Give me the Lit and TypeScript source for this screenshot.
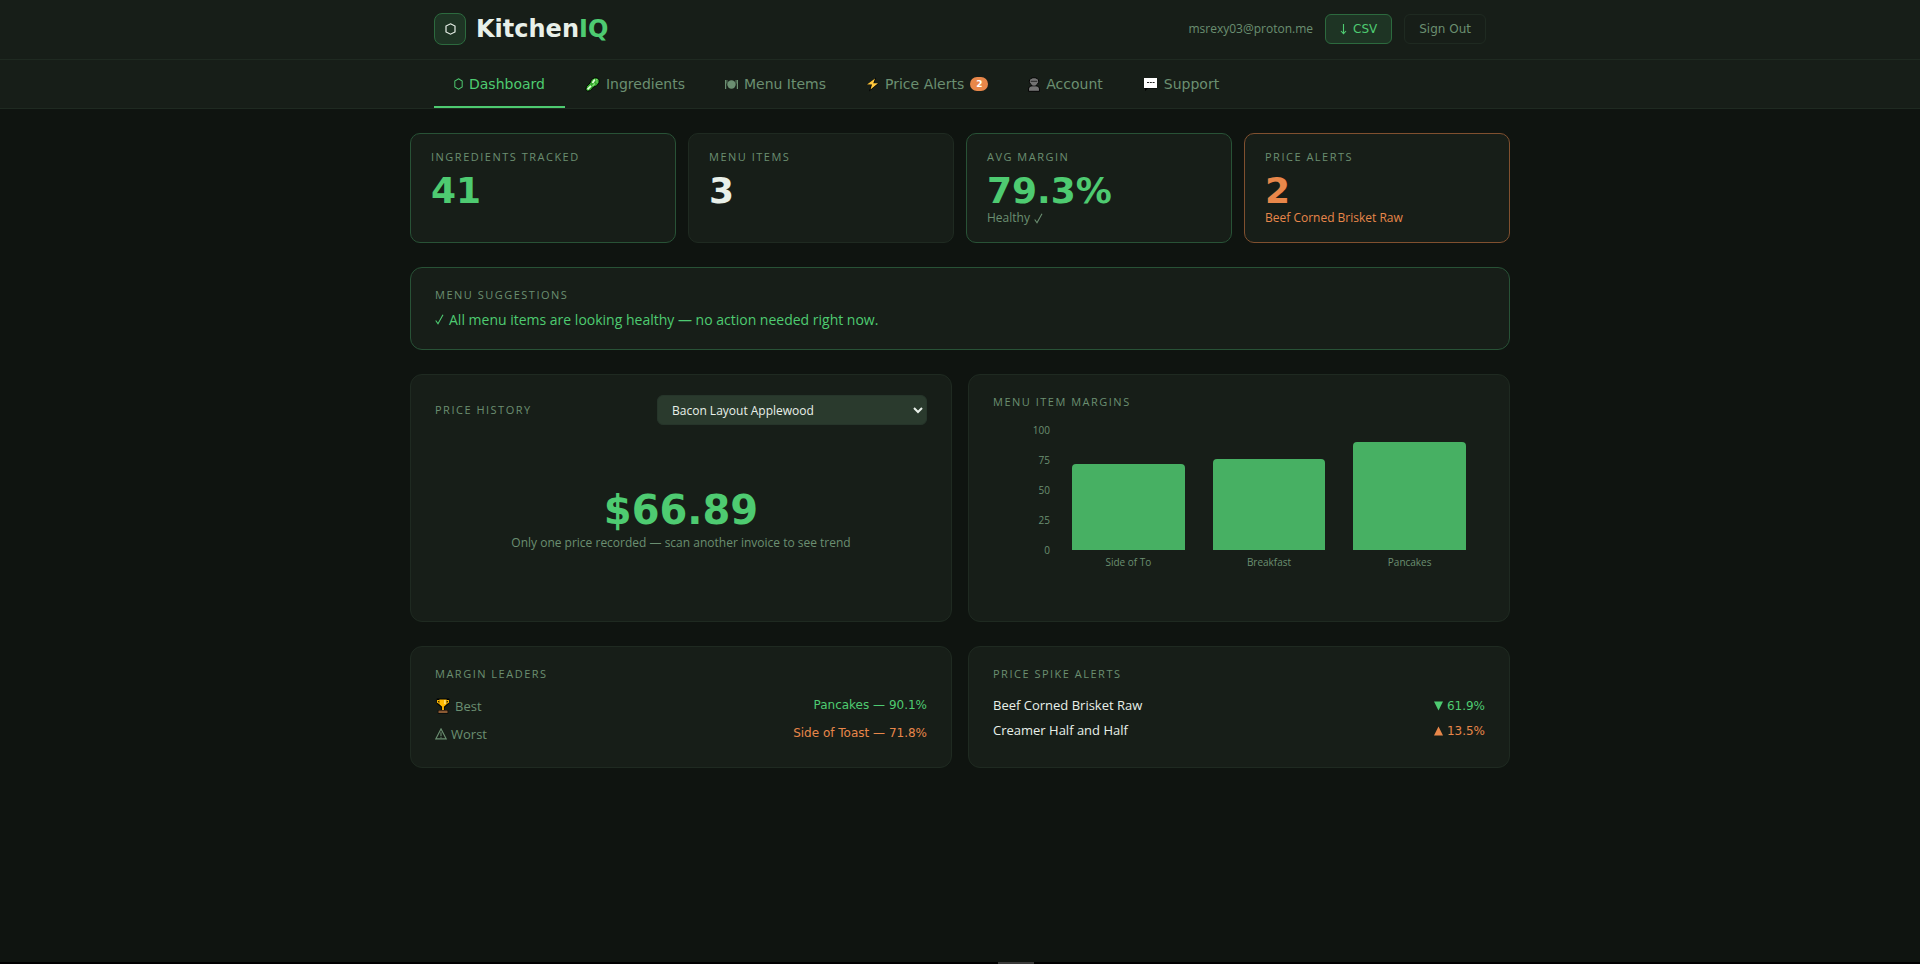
import { LitElement, html, css, svg } from "lit";
import { customElement, state } from "lit/decorators.js";

const hexagon = (w: number) => svg`
  <svg width=${w} height="12" viewBox="0 0 11 12" fill="none" stroke="currentColor" stroke-width="1.2" preserveAspectRatio="none" aria-hidden="true">
    <path d="M5.500 .8 10 3v6L5.500 11.200 1 9V3z"/>
  </svg>`;

const cucumber = svg`
  <svg width="15" height="15" viewBox="0 0 15 15" aria-hidden="true">
    <path d="M2.500 14.300.8 12.500 1.500 9.500 5 6l1.500-3.500L9.500.8l2.500.1 2.300 2-.3 3-2.500 3L8.500 10l-3 3.500z" fill="#35a82e" stroke="#000" stroke-width=".9"/>
    <path d="M2.500 12.300 6 8.800M7.500 6l2.300-3.500" stroke="#e0ffd9" stroke-width="1.800"/>
    <path d="M7.500 9 10 6.500M11 3l1.500-.5M11.500 5.500l1-1" stroke="#7fe070" stroke-width="1.500"/>
  </svg>`;

const plate = svg`
  <svg width="13" height="12" viewBox="0 0 13 12" fill="currentColor" aria-hidden="true">
    <circle cx="6.500" cy="6.500" r="4.200"/>
    <path d="M0 2h1.200v9H0zM1.600 2h.8v3.500h-.8zM11.800 2H13v9h-1.200zM10.600 2h.8v3.500h-.8z"/>
  </svg>`;

const bolt = svg`
  <svg width="13" height="15" viewBox="0 0 13 15" aria-hidden="true">
    <path d="M10 .5.5 8H5L3 14.500 12.800 6.500H8z" fill="#000"/>
    <path d="M9 1.500 1 7.500h5L4.500 12.500 12 6.200H7.300z" fill="#ffc83d"/>
  </svg>`;

const person = svg`
  <svg width="12" height="15" viewBox="0 0 11 15" preserveAspectRatio="none" aria-hidden="true">
    <path d="M5.500.7C3.200.7 1.200 2 1.200 4.200S3 7.800 4 8.700C1.500 9.200.5 10.300.5 12v2.300h10V12c0-1.700-1-2.800-3.500-3.300 1-.9 2.800-2.300 2.800-4.500S7.800.7 5.500.7z" fill="#737373" stroke="#000" stroke-width=".9"/>
    <path d="M2.500 4.300h6M4 9h3" stroke="#222" stroke-width=".9"/>
  </svg>`;

const bubble = svg`
  <svg width="15" height="14" viewBox="0 0 15 14" aria-hidden="true">
    <path d="M1 1.500h13v10H5L2 14V11.500H1z" fill="#000"/>
    <path d="M1 1h13v10H1z" fill="#fff"/>
    <path d="M4 5.500h2M6.800 5.500h2M9.600 5.500h2" stroke="#222" stroke-width="1"/>
  </svg>`;

const arrowDown = svg`
  <svg width="7" height="12" viewBox="0 0 7 12" fill="none" stroke="currentColor" stroke-width="1.100" aria-hidden="true">
    <path d="M3.500 1v9.500M1 8l2.500 2.700L6 8"/>
  </svg>`;

const check = svg`
  <svg width="9" height="11" viewBox="0 0 9 11" fill="none" stroke="currentColor" stroke-width="1.100" aria-hidden="true">
    <path d="M.7 6.500 3 9.800 8 .8"/>
  </svg>`;

const trophy = svg`
  <svg width="16" height="16" viewBox="0 0 14 16" preserveAspectRatio="none" aria-hidden="true">
    <path d="M1.500 .5h11v5L10 8 8.500 9.500v2.500h3V15.500h-9V12h3V9.500L4 8 1.500 5.500z" fill="#000"/>
    <path d="M3.800 1.500h6.400v4.700L8 8.500H6L3.800 6.200zM6.200 8.500h1.600v3.500H6.200z" fill="#ffb900"/>
    <path d="M4 2.500H2.300v2L4 5.500M10 2.500h1.700v2L10 5.500" stroke="#ffb900" fill="none"/>
    <path d="M8.700 2v4" stroke="#fff0a8" stroke-width="1"/>
    <path d="M3 12.500h8V15H3z" fill="#8a5a34"/>
  </svg>`;

const warning = svg`
  <svg width="12" height="12" viewBox="0 0 11 11" fill="none" stroke="currentColor" aria-hidden="true">
    <path d="M5.500 .8 10.300 10H.7zM5.500 4v3.300M5.500 8v1"/>
  </svg>`;

const triangle = (up: boolean) => svg`
  <svg width="9" height="10" viewBox="0 0 9 10" fill="currentColor" aria-hidden="true">
    <path d=${up ? "M4.500.5 9 9.500H0z" : "M0 .5h9l-4.500 9z"}/>
  </svg>`;

const TABS = [
  { label: "Dashboard", icon: hexagon(9) },
  { label: "Ingredients", icon: cucumber },
  { label: "Menu Items", icon: plate },
  { label: "Price Alerts", icon: bolt, count: 2 },
  { label: "Account", icon: person },
  { label: "Support", icon: bubble },
];

const MARGINS = [
  { name: "Side of To", value: 71.8 },
  { name: "Breakfast", value: 76 },
  { name: "Pancakes", value: 90.1 },
];

@customElement("app-root")
export class AppRoot extends LitElement {
  @state() private tab = "Dashboard";

  static styles = css`
    :host {
      --bg: #0f1410;
      --panel: #171e18;
      --line: #1f2a21;
      --green: #4ecb71;
      --orange: #e8874a;
      --muted: #6b8f71;
      --text: #e8f0e9;
      --wide: "DejaVu Sans", Verdana, sans-serif;
      display: block;
      min-height: 100vh;
      background: var(--bg);
      color: var(--text);
      font: 13px/20px "Open Sans", sans-serif;
    }
    * { box-sizing: border-box; }
    svg { flex: none; display: block; }
    button { font: inherit; cursor: pointer; }
    .inner { max-width: 1100px; margin: 0 auto; padding: 0 24px; display: flex; align-items: center; }

    .top { background: var(--panel); border-bottom: 1px solid var(--line); }
    .top .inner { padding: 13px 24px 14px; justify-content: space-between; }
    .brand { display: flex; align-items: center; gap: 10px; }
    .mark {
      width: 32px; height: 32px; border-radius: 8px; display: grid; place-items: center;
      background: #1e3424; border: 1px solid #2c6a3e;
    }
    .name { font: 700 24px/32px var(--wide); }
    .name span { color: var(--green); }
    .session { display: flex; align-items: center; gap: 12px; font-size: 12px; color: var(--muted); }
    .session button {
      display: flex; align-items: center; gap: 6px; height: 30px; padding: 0 14px;
      border: 1px solid var(--line); border-radius: 6px; background: none;
      color: var(--muted); font: 12px/16px var(--wide);
    }
    .session .csv { background: #1e3424; border-color: #2c6a3e; color: var(--green); }

    .nav { background: var(--panel); border-bottom: 1px solid var(--line); }
    .tab {
      display: flex; align-items: center; gap: 6px; padding: 15px 20px 13px;
      border: 0; border-bottom: 2px solid transparent; background: none;
      color: var(--muted); font: 14px/18px var(--wide); white-space: nowrap;
    }
    .tab.active { color: var(--green); border-bottom-color: var(--green); }
    .badge {
      min-width: 18px; height: 14px; border-radius: 7px; background: var(--orange);
      color: #fff; font: 700 9px/14px var(--wide); text-align: center;
    }

    main { max-width: 1100px; margin: 0 auto; padding: 24px 0; display: grid; gap: 24px; }
    .stats { display: grid; grid-template-columns: repeat(4, 1fr); gap: 12px; }
    .pair { display: grid; grid-template-columns: repeat(2, 1fr); gap: 16px; }
    .card { background: var(--panel); border: 1px solid var(--line); border-radius: 12px; padding: 20px 24px; }
    .card.good { border-color: #285236; }
    .card.warn { border-color: #80502f; }
    .stats .card { padding: 16px 20px; border-radius: 10px; }
    h2 {
      margin: 0; font-size: 11px; line-height: 14px; font-weight: 400;
      letter-spacing: 1.5px; text-transform: uppercase; color: var(--muted);
    }
    .value { margin: 9px 0 1px; font: 700 36px/36px var(--wide); }
    .note { display: flex; align-items: center; gap: 4px; font-size: 12px; line-height: 16px; color: var(--muted); }
    .green { color: var(--green); }
    .orange { color: var(--orange); }
    .advice { display: flex; align-items: center; gap: 5px; margin: 8px 0 0; font-size: 14px; line-height: 19px; color: var(--green); }

    .head { display: flex; align-items: center; justify-content: space-between; }
    select {
      width: 270px; height: 30px; padding: 0 10px; border: 1px solid #26352a; border-radius: 6px;
      background: #2a3a2d; color: var(--text); font: 12px/18px "Open Sans", sans-serif;
    }
    .single {
      display: flex; flex-direction: column; align-items: center; justify-content: center; gap: 4px;
      min-height: 160px; margin-top: 16px; font-size: 12px; line-height: 18px; color: var(--muted);
    }
    .price { font: 700 40px/40px var(--wide); color: var(--green); }

    .chart { display: flex; gap: 8px; margin-top: 15px; padding-right: 5px; font-size: 10px; line-height: 12px; color: var(--muted); }
    .axis { width: 57px; height: 132px; display: flex; flex-direction: column; justify-content: space-between; text-align: right; }
    .plot { flex: 1; display: grid; grid-template-columns: repeat(3, 1fr); padding-top: 6px; }
    .col { display: grid; grid-template-rows: 120px auto; gap: 6px; text-align: center; }
    .bar { width: 80%; align-self: end; justify-self: center; border-radius: 4px 4px 0 0; background: #47b063; }

    .rows { display: grid; gap: 4px; margin: 14px 0 0; padding: 0; list-style: none; }
    .rows li { display: flex; align-items: center; justify-content: space-between; line-height: 21px; }
    .leaders li { height: 24px; align-items: flex-start; line-height: 22px; }
    .rows span { display: flex; align-items: center; gap: 4px; }
    .key { color: var(--muted); }
    .figure { font: 12px/20px var(--wide); }

    .dock { position: fixed; inset: auto 0 0 0; height: 2px; background: #000; }
    .dock::before { content: ""; display: block; width: 36px; height: 2px; margin-left: 52%; background: #3a3a3a; }
  `;

  render() {
    return html`
      <header class="top">
        <div class="inner">
          <div class="brand">
            <div class="mark">${hexagon(11)}</div>
            <div class="name">Kitchen<span>IQ</span></div>
          </div>
          <div class="session">
            msrexy03@proton.me
            <button class="csv">${arrowDown}CSV</button>
            <button>Sign Out</button>
          </div>
        </div>
      </header>
      <nav class="nav">
        <div class="inner">
          ${TABS.map((t) => html`
            <button class="tab ${t.label === this.tab ? "active" : ""}" @click=${() => (this.tab = t.label)}>
              ${t.icon}${t.label}${t.count ? html`<span class="badge">${t.count}</span>` : ""}
            </button>`)}
        </div>
      </nav>
      <main>
        <div class="stats">
          <section class="card good"><h2>Ingredients Tracked</h2><div class="value green">41</div></section>
          <section class="card"><h2>Menu Items</h2><div class="value">3</div></section>
          <section class="card good">
            <h2>Avg Margin</h2><div class="value green">79.3%</div><div class="note">Healthy ${check}</div>
          </section>
          <section class="card warn">
            <h2>Price Alerts</h2><div class="value orange">2</div><div class="note orange">Beef Corned Brisket Raw</div>
          </section>
        </div>
        <section class="card good">
          <h2>Menu Suggestions</h2>
          <p class="advice">${check}All menu items are looking healthy — no action needed right now.</p>
        </section>
        <div class="pair">
          <section class="card">
            <div class="head">
              <h2 id="history">Price History</h2>
              <select aria-labelledby="history"><option>Bacon Layout Applewood</option></select>
            </div>
            <div class="single">
              <div class="price">$66.89</div>
              <div>Only one price recorded — scan another invoice to see trend</div>
            </div>
          </section>
          <section class="card">
            <h2>Menu Item Margins</h2>
            <div class="chart">
              <div class="axis">${[100, 75, 50, 25, 0].map((n) => html`<div>${n}</div>`)}</div>
              <div class="plot">
                ${MARGINS.map((m) => html`
                  <div class="col"><div class="bar" style="height:${m.value}%"></div><div>${m.name}</div></div>`)}
              </div>
            </div>
          </section>
        </div>
        <div class="pair">
          <section class="card">
            <h2>Margin Leaders</h2>
            <ul class="rows leaders">
              <li><span class="key">${trophy}Best</span><span class="figure green">Pancakes — 90.1%</span></li>
              <li><span class="key">${warning}Worst</span><span class="figure orange">Side of Toast — 71.8%</span></li>
            </ul>
          </section>
          <section class="card">
            <h2>Price Spike Alerts</h2>
            <ul class="rows">
              <li><span>Beef Corned Brisket Raw</span><span class="figure green">${triangle(false)}61.9%</span></li>
              <li><span>Creamer Half and Half</span><span class="figure orange">${triangle(true)}13.5%</span></li>
            </ul>
          </section>
        </div>
      </main>
      <div class="dock"></div>
    `;
  }
}
